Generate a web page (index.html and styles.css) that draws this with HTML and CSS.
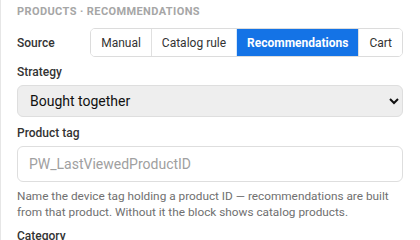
FILE: index.html
```html
<!DOCTYPE html>
<html lang="en">
<head>
  <meta charset="UTF-8">
  <title>Products block settings</title>
  <link rel="stylesheet" href="styles.css">
</head>
<body>

<div class="panel">
  <h3 class="section-title">Products · Recommendations</h3>

  <div class="row">
    <span class="label">Source</span>
    <div class="segmented">
      <button>Manual</button>
      <button>Catalog rule</button>
      <button class="active">Recommendations</button>
      <button>Cart</button>
    </div>
  </div>

  <div class="field">
    <label class="label" for="strategy">Strategy</label>
    <select id="strategy">
      <option>Bought together</option>
      <option>Similar products</option>
      <option>Popular</option>
    </select>
  </div>

  <div class="field">
    <label class="label" for="tag">Product tag</label>
    <input id="tag" type="text" placeholder="PW_LastViewedProductID">
    <p class="hint">Name the device tag holding a product ID — recommendations are built from that product. Without it the block shows catalog products.</p>
  </div>

  <div class="field">
    <span class="label">Category</span>
  </div>
</div>

</body>
</html>
```

FILE: styles.css
```css
body {
  margin: 0;
  font-family: Roboto, "Liberation Sans", Arial, sans-serif;
  background-color: #fff;
  color: #333;
}

.panel {
  border-left: 1px solid #e6e6e6;
  padding: 5px 17px 0 16px;
  height: 240px;
  box-sizing: border-box;
  overflow: hidden;
}

.section-title {
  margin: 0 0 9px;
  font-size: 11px;
  font-weight: bold;
  letter-spacing: 0.4px;
  text-transform: uppercase;
  color: #a6a6a6;
  line-height: 14px;
}

.label {
  display: block;
  font-size: 12px;
  font-weight: 500;
  color: #333;
  line-height: 16px;
}

.row {
  display: flex;
  align-items: center;
  margin-bottom: 7px;
}

.segmented {
  display: flex;
  border: 1px solid #dcdcdc;
  border-radius: 5px;
  overflow: hidden;
  height: 29px;
  box-sizing: border-box;
  margin-left: auto;
}

.segmented button {
  font-family: inherit;
  font-size: 12px;
  white-space: nowrap;
  color: #333;
  background: #fff;
  border: none;
  border-left: 1px solid #e0e0e0;
  padding: 0 10px;
  cursor: pointer;
}

.segmented button:first-child {
  border-left: none;
}

.segmented button.active {
  background-color: #1473e6;
  color: #fff;
  font-weight: bold;
  border-left-color: #d6e8fb;
}

.field {
  margin-bottom: 8px;
}

.field .label {
  margin-bottom: 5px;
}

select {
  display: block;
  width: 100%;
  height: 32px;
  font-family: inherit;
  font-size: 14px;
  color: #111;
  background-color: #eeeeee;
  border: 1px solid #dedede;
  border-radius: 6px;
  padding: 0 8px;
}

input {
  display: block;
  width: 100%;
  height: 36px;
  box-sizing: border-box;
  font-family: inherit;
  font-size: 14px;
  color: #333;
  border: 1px solid #dedede;
  border-radius: 6px;
  padding: 0 11px;
}

input::placeholder {
  color: #a0a0a0;
}

.hint {
  margin: 6px 0 0;
  font-size: 11.8px;
  line-height: 16px;
  color: #707070;
}
```
